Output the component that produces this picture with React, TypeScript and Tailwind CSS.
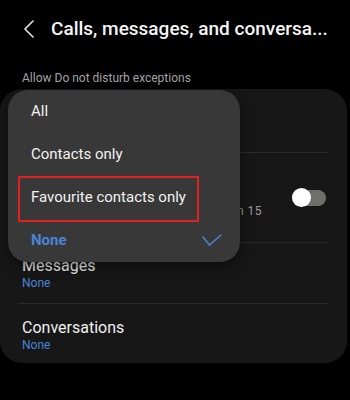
import React from "react";

function Divider() {
  return <div className="mx-[18px] h-px bg-[#2a2a2a]" />;
}

export default function App() {
  const items = ["All", "Contacts only", "Favourite contacts only"];
  return (
    <div
      className="relative w-[350px] h-[400px] overflow-hidden bg-black text-white"
      style={{ fontFamily: "Roboto, 'Noto Sans', sans-serif" }}
    >
      {/* Header */}
      <div className="flex h-[58px] items-center">
        <svg className="ml-[23px] h-[18px] w-[12px]" viewBox="0 0 12 18" fill="none">
          <path d="M10 1 L2 9 L10 17" stroke="#e8e8e8" strokeWidth="1.6" strokeLinecap="round" strokeLinejoin="round" />
        </svg>
        <div className="ml-[16px] text-[19px] font-medium text-[#f5f5f5] whitespace-nowrap">
          Calls, messages, and conversa...
        </div>
      </div>

      <div className="mt-[12px] ml-[22px] h-[16px] text-[12px] leading-[16px] text-[#a3a3a3]">
        Allow Do not disturb exceptions
      </div>

      {/* Card */}
      <div className="mt-[3px] w-[347px] rounded-[22px] bg-[#171717]">
        <div className="h-[63px]" />
        <Divider />
        <div className="flex h-[89px] items-center pl-[22px] pr-[21px]">
          <div className="flex-1 pt-[26px]">
            <div className="w-[240px] text-right text-[12px] leading-[16px] text-[#9a9a9a] tracking-[0.5px]">
              within 15
            </div>
          </div>
          <div className="relative h-[16px] w-[34px] rounded-full bg-[#6e6e6a]">
            <div className="absolute left-0 top-[-1.5px] h-[19px] w-[19px] rounded-full bg-white" />
          </div>
        </div>
        <Divider />
        <div className="h-[60px] px-[22px] pt-[13px]">
          <div className="text-[16px] leading-[20px] text-[#f0f0f0]">Messages</div>
          <div className="text-[12px] leading-[14px] text-[#4a84d8]">None</div>
        </div>
        <Divider />
        <div className="h-[59px] px-[22px] pt-[14px]">
          <div className="text-[16px] leading-[20px] text-[#f0f0f0]">Conversations</div>
          <div className="text-[12px] leading-[14px] text-[#4a84d8]">None</div>
        </div>
      </div>

      {/* Popup menu */}
      <div className="absolute left-[8px] top-[90px] w-[232px] rounded-[20px] bg-[#383838] shadow-[0_4px_14px_rgba(0,0,0,0.5)]">
        {items.map((t) => (
          <div key={t} className="flex h-[43px] items-center pl-[23px] text-[15px] text-[#f2f2f2]">
            {t}
          </div>
        ))}
        <div className="flex h-[43px] items-center justify-between pl-[23px] pr-[18px]">
          <span className="text-[15px] font-bold text-[#4a84d8]">None</span>
          <svg className="h-[14px] w-[20px]" viewBox="0 0 20 14" fill="none">
            <path d="M1 3 L7.5 11 L19 1" stroke="#4a84d8" strokeWidth="1.6" strokeLinecap="round" strokeLinejoin="round" />
          </svg>
        </div>
        <div className="pointer-events-none absolute left-[10px] top-[86px] h-[46px] w-[181px] border-2 border-[#e02025]" />
      </div>
    </div>
  );
}
